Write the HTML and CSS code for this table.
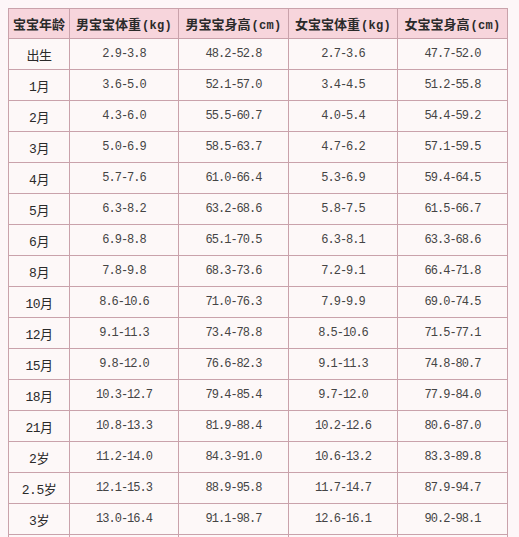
FILE: index.html
```html
<!DOCTYPE html>
<html lang="zh">
<head>
<meta charset="utf-8">
<title>宝宝身高体重</title>
<link rel="stylesheet" href="styles.css">
</head>
<body class="page">
<table class="chart">
  <colgroup>
    <col class="c-age"><col class="c-w"><col class="c-h"><col class="c-w"><col class="c-h">
  </colgroup>
  <thead>
    <tr><th>宝宝年龄</th><th>男宝宝体重<span class="u">(kg)</span></th><th>男宝宝身高<span class="u">(cm)</span></th><th>女宝宝体重<span class="u">(kg)</span></th><th>女宝宝身高<span class="u">(cm)</span></th></tr>
  </thead>
  <tbody>
    <tr><td class="age">出生</td><td>2.9-3.8</td><td>48.2-52.8</td><td>2.7-3.6</td><td>47.7-52.0</td></tr>
    <tr><td class="age">1月</td><td>3.6-5.0</td><td>52.1-57.0</td><td>3.4-4.5</td><td>51.2-55.8</td></tr>
    <tr><td class="age">2月</td><td>4.3-6.0</td><td>55.5-60.7</td><td>4.0-5.4</td><td>54.4-59.2</td></tr>
    <tr><td class="age">3月</td><td>5.0-6.9</td><td>58.5-63.7</td><td>4.7-6.2</td><td>57.1-59.5</td></tr>
    <tr><td class="age">4月</td><td>5.7-7.6</td><td>61.0-66.4</td><td>5.3-6.9</td><td>59.4-64.5</td></tr>
    <tr><td class="age">5月</td><td>6.3-8.2</td><td>63.2-68.6</td><td>5.8-7.5</td><td>61.5-66.7</td></tr>
    <tr><td class="age">6月</td><td>6.9-8.8</td><td>65.1-70.5</td><td>6.3-8.1</td><td>63.3-68.6</td></tr>
    <tr><td class="age">8月</td><td>7.8-9.8</td><td>68.3-73.6</td><td>7.2-9.1</td><td>66.4-71.8</td></tr>
    <tr><td class="age">10月</td><td>8.6-10.6</td><td>71.0-76.3</td><td>7.9-9.9</td><td>69.0-74.5</td></tr>
    <tr><td class="age">12月</td><td>9.1-11.3</td><td>73.4-78.8</td><td>8.5-10.6</td><td>71.5-77.1</td></tr>
    <tr><td class="age">15月</td><td>9.8-12.0</td><td>76.6-82.3</td><td>9.1-11.3</td><td>74.8-80.7</td></tr>
    <tr><td class="age">18月</td><td>10.3-12.7</td><td>79.4-85.4</td><td>9.7-12.0</td><td>77.9-84.0</td></tr>
    <tr><td class="age">21月</td><td>10.8-13.3</td><td>81.9-88.4</td><td>10.2-12.6</td><td>80.6-87.0</td></tr>
    <tr><td class="age">2岁</td><td>11.2-14.0</td><td>84.3-91.0</td><td>10.6-13.2</td><td>83.3-89.8</td></tr>
    <tr><td class="age">2.5岁</td><td>12.1-15.3</td><td>88.9-95.8</td><td>11.7-14.7</td><td>87.9-94.7</td></tr>
    <tr><td class="age">3岁</td><td>13.0-16.4</td><td>91.1-98.7</td><td>12.6-16.1</td><td>90.2-98.1</td></tr>
    <tr class="tail"><td></td><td></td><td></td><td></td><td></td></tr>
  </tbody>
</table>
</body>
</html>
```

FILE: styles.css
```css
html, body {
  background: #fdf6f8;
}
.page {
  margin: 8px;
}
.chart {
  border-collapse: collapse;
  table-layout: fixed;
  width: 500px;
  background: #fdf8f8;
  color: #333;
}
.c-age { width: 61px; }
.c-w { width: 109px; }
.c-h { width: 110px; }
.chart th,
.chart td {
  border: 1px solid #c9a2ab;
  padding: 0;
  text-align: center;
  vertical-align: middle;
  white-space: nowrap;
}
.chart th {
  height: 29px;
  background: #f7d5dc;
  font-family: "Noto Sans CJK SC", sans-serif;
  font-weight: 700;
  font-size: 13px;
  color: #2a2a2a;
}
.chart th .u {
  font-family: "Liberation Mono", monospace;
  font-size: 12px;
  letter-spacing: 0.3px;
  padding-left: 1px;
}
.chart td {
  height: 30px;
  font-family: "Liberation Mono", monospace;
  font-size: 12px;
  letter-spacing: -1px;
  color: #444;
}
.chart td.age {
  font-family: "Liberation Mono", "Noto Sans CJK SC", monospace;
  font-size: 13px;
  letter-spacing: -0.5px;
  color: #2a2a2a;
}
```
